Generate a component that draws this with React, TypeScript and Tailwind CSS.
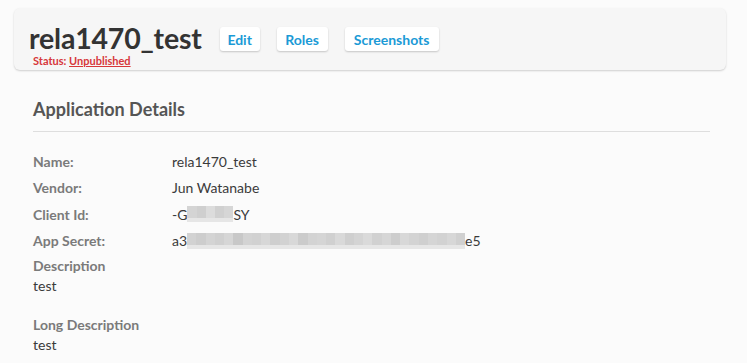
import React from "react";

const clientShades = ["#d4d4d4", "#cfcfcf", "#dcdcdc", "#d0d0d0", "#d6d6d6"];
const secretShades = [
  "#d2d2d2", "#cdcdcd", "#d4d4d4", "#d0d0d0", "#d6d6d6", "#c8c8c8", "#d3d3d3", "#d1d1d1",
  "#d7d7d7", "#cecece", "#d2d2d2", "#d8d8d8", "#cbcbcb", "#d3d3d3", "#d5d5d5", "#d0d0d0",
  "#d9d9d9", "#cfcfcf", "#d4d4d4", "#dadada", "#d1d1d1", "#d6d6d6", "#cdcdcd", "#d8d8d8",
  "#d3d3d3", "#cfcfcf", "#d5d5d5", "#d2d2d2", "#d7d7d7", "#d0d0d0",
];

function Blur({ shades, width }: { shades: string[]; width: number }) {
  return (
    <span className="inline-flex h-[16px] align-middle" style={{ width }}>
      {shades.map((c, i) => (
        <span key={i} className="flex-1 h-full flex flex-col">
          <span className="flex-1" style={{ background: c }} />
          <span className="h-[4px]" style={{ background: "#e6e6e6" }} />
        </span>
      ))}
    </span>
  );
}

function Row({ label, children }: { label: string; children: React.ReactNode }) {
  return (
    <div className="flex h-[26.5px] items-center">
      <div className="w-[139px] font-bold text-[#7a7a7a]">{label}</div>
      <div className="text-[#3a3a3a] flex items-center">{children}</div>
    </div>
  );
}

const btn =
  "h-[24px] bg-white rounded-[3px] shadow-[0_1px_2px_rgba(0,0,0,0.2)] text-[14px] font-bold text-[#1b9ad6] flex items-center justify-center";

export default function App() {
  return (
    <div
      className="w-[747px] h-[363px] overflow-hidden bg-[#fbfbfb] text-[14px]"
      style={{ fontFamily: "Lato, 'Open Sans', sans-serif" }}
    >
      <div className="pt-[8px] pl-[14px] pr-[21px]">
        <div className="h-[62px] rounded-[6px] bg-[#f6f6f6] shadow-[0_1px_2px_rgba(0,0,0,0.18)] flex items-start pl-[15px]">
          <div className="flex flex-col pt-[16px]">
            <div className="text-[28.5px] leading-[28px] font-bold text-[#333] tracking-[-0.2px]">rela1470_test</div>
            <div className="text-[11px] leading-[11px] font-bold text-[#d7373a] pl-[4px] mt-[3px]">
              Status: <span className="underline">Unpublished</span>
            </div>
          </div>
          <div className="flex gap-[17px] ml-[18px] mt-[19px]">
            <button className={btn + " w-[40px]"}>Edit</button>
            <button className={btn + " w-[51px]"}>Roles</button>
            <button className={btn + " w-[94px]"}>Screenshots</button>
          </div>
        </div>
      </div>
      <div className="pl-[33px] pr-[37px] pt-[28px]">
        <div className="text-[18px] font-bold text-[#555] leading-[22px] pb-[11px] border-b border-[#dedede]">
          Application Details
        </div>
        <div className="pt-[16px]">
          <Row label="Name:">rela1470_test</Row>
          <Row label="Vendor:">Jun Watanabe</Row>
          <Row label="Client Id:">
            <span>-G</span>
            <Blur shades={clientShades} width={46} />
            <span>SY</span>
          </Row>
          <Row label="App Secret:">
            <span>a3</span>
            <Blur shades={secretShades} width={278} />
            <span>e5</span>
          </Row>
          <div className="font-bold text-[#7a7a7a] leading-[20px] mt-[2px]">Description</div>
          <div className="text-[#3a3a3a] leading-[20px]">test</div>
          <div className="font-bold text-[#7a7a7a] leading-[20px] mt-[19px]">Long Description</div>
          <div className="text-[#3a3a3a] leading-[20px]">test</div>
        </div>
      </div>
    </div>
  );
}
